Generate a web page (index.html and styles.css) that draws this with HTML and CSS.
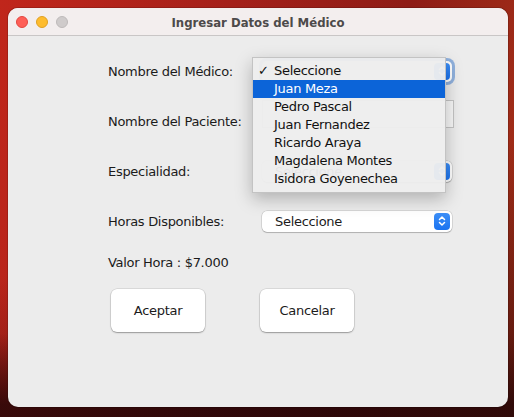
FILE: index.html
```html
<!DOCTYPE html>
<html lang="es">
<head>
<meta charset="utf-8">
<title>Ingresar Datos del Médico</title>
<link rel="stylesheet" href="styles.css">
</head>
<body>
<div class="window">
  <div class="titlebar">
    <div class="lights">
      <span class="light red"></span>
      <span class="light yellow"></span>
      <span class="light gray"></span>
    </div>
    <div class="title">Ingresar Datos del Médico</div>
  </div>
  <div class="content">
    <div class="row">
      <span class="label">Nombre del Médico:</span>
      <div class="combo focused"><span class="combo-text">Seleccione</span><span class="stepper"><svg width="16" height="16" viewBox="0 0 16 16"><path d="M5.5 6.5 8 4l2.5 2.5M5.5 9.5 8 12l2.5-2.5" fill="none" stroke="#fff" stroke-width="1.5" stroke-linecap="round" stroke-linejoin="round"/></svg></span></div>
    </div>
    <div class="row">
      <span class="label">Nombre del Paciente:</span>
      <div class="textfield"></div>
    </div>
    <div class="row">
      <span class="label">Especialidad:</span>
      <div class="combo"><span class="combo-text">Seleccione</span><span class="stepper"><svg width="16" height="16" viewBox="0 0 16 16"><path d="M5.5 6.5 8 4l2.5 2.5M5.5 9.5 8 12l2.5-2.5" fill="none" stroke="#fff" stroke-width="1.5" stroke-linecap="round" stroke-linejoin="round"/></svg></span></div>
    </div>
    <div class="row">
      <span class="label">Horas Disponibles:</span>
      <div class="combo"><span class="combo-text">Seleccione</span><span class="stepper"><svg width="16" height="16" viewBox="0 0 16 16"><path d="M5.5 6.5 8 4l2.5 2.5M5.5 9.5 8 12l2.5-2.5" fill="none" stroke="#fff" stroke-width="1.5" stroke-linecap="round" stroke-linejoin="round"/></svg></span></div>
    </div>
    <div class="row short">
      <span class="label">Valor Hora : $7.000</span>
    </div>
    <div class="buttons">
      <button class="btn">Aceptar</button>
      <button class="btn">Cancelar</button>
    </div>

    <ul class="popup">
      <li class="item"><span class="check">✓</span>Seleccione</li>
      <li class="item selected">Juan Meza</li>
      <li class="item">Pedro Pascal</li>
      <li class="item">Juan Fernandez</li>
      <li class="item">Ricardo Araya</li>
      <li class="item">Magdalena Montes</li>
      <li class="item">Isidora Goyenechea</li>
    </ul>
  </div>
</div>
</body>
</html>
```

FILE: styles.css
```css
* { box-sizing: border-box; }
html, body { margin: 0; padding: 0; }
body {
  width: 514px;
  height: 417px;
  overflow: hidden;
  font-family: "DejaVu Sans", "Liberation Sans", sans-serif;
  background:
    linear-gradient(180deg, transparent 80%, rgba(30,4,6,0.75) 97%),
    linear-gradient(165deg, transparent 50%, rgba(40,6,8,0.5) 85%),
    linear-gradient(100deg, #c0261b 0%, #a4201a 40%, #8e1c16 70%, #a63218 100%);
  padding: 8px 6px 0 8px;
}
.window {
  width: 500px;
  height: 399px;
  border-radius: 10px;
  background: #ececec;
  overflow: hidden;
  display: flex;
  flex-direction: column;
  box-shadow: 0 0 0 1px rgba(0,0,0,0.15);
}
.titlebar {
  height: 28px;
  flex: none;
  background: #f3eeee;
  border-bottom: 1px solid #c9c6c6;
  display: flex;
  align-items: center;
  position: relative;
}
.lights {
  display: flex;
  gap: 8px;
  padding-left: 8px;
}
.light {
  width: 12px;
  height: 12px;
  border-radius: 50%;
  display: block;
}
.red { background: #fe5f57; border: 0.5px solid #e2463f; }
.yellow { background: #febc2e; border: 0.5px solid #dfa023; }
.gray { background: #cfcbcb; border: 0.5px solid #bdb9b9; }
.title {
  position: absolute;
  left: 0; right: 0; top: 0; bottom: 0;
  display: flex;
  align-items: center;
  justify-content: center;
  font-family: "DejaVu Sans Condensed", "DejaVu Sans", sans-serif;
  font-stretch: condensed;
  font-size: 13px;
  font-weight: bold;
  color: #4d4a4a;
  padding-top: 1px;
}
.content {
  position: relative;
  flex: 1;
  padding: 10px 0 0 100px;
  font-size: 13px;
  letter-spacing: -0.3px;
  color: #1b1b1b;
}
.row {
  height: 50px;
  display: flex;
  align-items: center;
}
.row.short { height: 32px; }
.label {
  width: 154px;
  flex: none;
}
.combo {
  width: 190px;
  height: 21px;
  background: #fff;
  border-radius: 5px;
  box-shadow: 0 0 0 0.5px rgba(0,0,0,0.18), 0 1px 1px rgba(0,0,0,0.18);
  display: flex;
  align-items: center;
  justify-content: space-between;
  padding: 0 2px 0 13px;
}
.combo.focused {
  box-shadow: 0 0 0 3px rgba(70,130,210,0.55);
}
.stepper {
  width: 16px;
  height: 17px;
  border-radius: 4px;
  background: linear-gradient(#3d8ff7, #1a73f0);
  display: flex;
  align-items: center;
  justify-content: center;
}
.textfield {
  width: 192px;
  height: 28px;
  align-self: flex-start;
  margin-top: 4px;
  background: #f7f7f7;
  border: 1px solid #c4c4c4;
}
.buttons {
  display: flex;
  gap: 55px;
  padding: 11px 0 0 3px;
}
.btn {
  width: 94px;
  height: 43px;
  border: none;
  border-radius: 6px;
  background: #fff;
  box-shadow: 0 0 0 0.5px rgba(0,0,0,0.15), 0 1px 1.5px rgba(0,0,0,0.3);
  font-family: inherit;
  font-size: 13px;
  letter-spacing: -0.3px;
  color: #1b1b1b;
}
.popup {
  position: absolute;
  left: 244px;
  top: 21px;
  width: 194px;
  margin: 0;
  padding: 4px 0;
  list-style: none;
  background: rgba(237,237,237,0.96);
  border: 1px solid #c3c3c3;
  box-shadow: 0 6px 16px rgba(0,0,0,0.25);
}
.item {
  height: 18px;
  line-height: 18px;
  padding-left: 21px;
  position: relative;
  color: #111;
}
.item.selected {
  background: #0c64d8;
  color: #fff;
}
.check {
  position: absolute;
  left: 5px;
  top: 0;
}
```
